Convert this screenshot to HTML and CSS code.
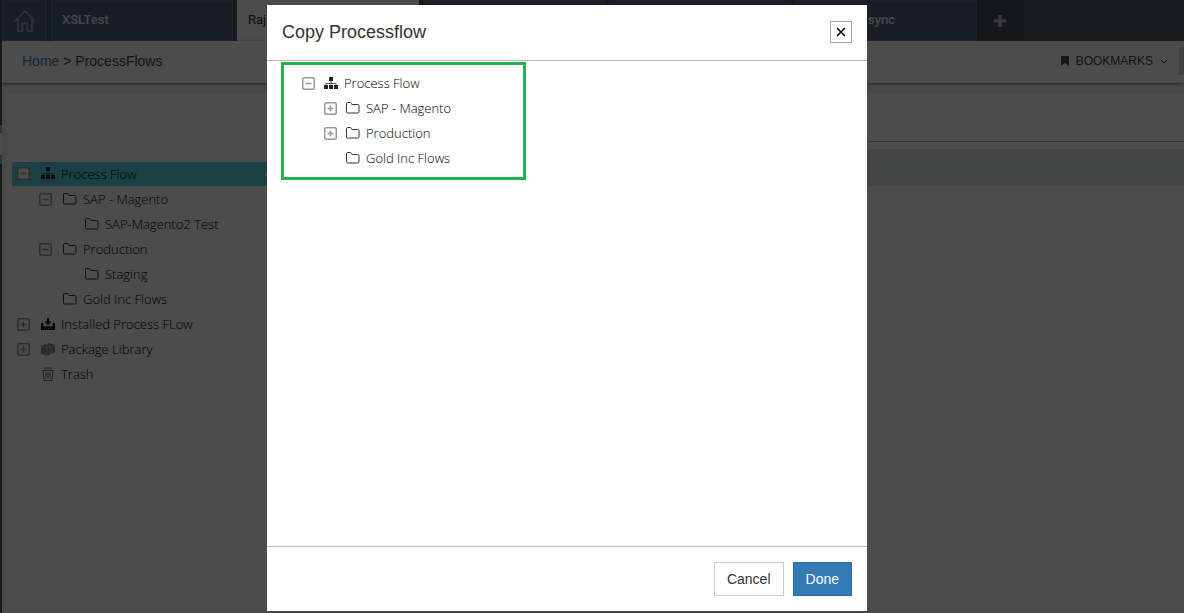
FILE: index.html
```html
<!DOCTYPE html>
<html lang="en">
<head>
<meta charset="utf-8">
<title>ProcessFlows</title>
<link rel="stylesheet" href="styles.css">
</head>
<body>
<svg class="sprite" aria-hidden="true">
  <symbol id="minus" viewBox="0 0 13 13"><rect x=".75" y=".75" width="11.500" height="11.500" rx="1.500"/><path d="M3.500 6.500h6"/></symbol>
  <symbol id="plus" viewBox="0 0 13 13"><rect x=".75" y=".75" width="11.500" height="11.500" rx="1.500"/><path d="M3.500 6.500h6M6.500 3.500v6"/></symbol>
  <symbol id="folder" viewBox="0 0 14 14"><path d="M.5 10.800V2.700Q.5 1.500 1.700 1.500h2.600q.8 0 1 .8l.2.8q.1.4.6.4h5.600q1.300 0 1.300 1.200v6.100q0 1.200-1.200 1.200H1.700Q.5 12 .5 10.800z" fill="none" stroke="currentColor"/></symbol>
  <symbol id="flow" viewBox="0 0 14 14"><path d="M5 1h4v4H5zM0 9h4v4H0zM5 9h4v4H5zM10 9h4v4h-4z" fill="#222"/><path d="M7 5v4M2 9V7.500h10V9" fill="none" stroke="#555"/></symbol>
  <symbol id="install" viewBox="0 0 14 14"><path d="M0 6h2.500v3.500h9V6H14v6.500q0 .5-.5.5H.5q-.5 0-.5-.5zM6 1h2v3.500h2.500L7 8.500 3.500 4.500H6z" fill="#000"/><path d="M1 11.500h12" stroke="#555" stroke-dasharray="1 1"/></symbol>
  <symbol id="package" viewBox="0 0 14 14"><path d="M0 4l8-3 6 2v7l-8 4-6-2.500z" fill="#8a8a8a"/><path d="M0 4l6 2 8-3M6 6v8M4 2.500l6 2.200v2.600M8 10.500l4-2M8 12l3-1.500" fill="none" stroke="#c8c8c8"/></symbol>
  <symbol id="trash" viewBox="0 0 14 14"><path d="M.5 3.500h13M4 3V1h6v2M2 4l1 9.500h8L12 4M5 5.500v6.500M7 5.500v6.500M9 5.500v6.500" fill="none" stroke="#777"/></symbol>
</svg>

<div class="app">
  <div class="rail"><span class="rail-marker"></span></div>
  <div class="main">
    <nav class="tabs">
      <a class="tab tab-home" href="#" aria-label="Home page"><svg class="home-icon" viewBox="0 0 22 24"><path d="M1 12.500L11 2l10 10.500M4 10.500V22h4.500v-7.500h5V22H18V10.500" fill="none" stroke="currentColor" stroke-width="1.800" stroke-linejoin="round"/></svg></a>
      <a class="tab" href="#">XSLTest</a>
      <a class="tab tab-active" href="#">Raj</a>
      <a class="tab" href="#" aria-label="Tab 3"></a>
      <a class="tab" href="#" aria-label="Tab 4"></a>
      <a class="tab tab-end" href="#">sync</a>
      <button class="tab-add" type="button" aria-label="Add tab"><svg class="add-icon" viewBox="0 0 12 12"><path d="M6 0v12M0 6h12" stroke="currentColor" stroke-width="3.500"/></svg></button>
    </nav>
    <header class="crumbs">
      <div><a class="crumb-link" href="#">Home</a> &gt; ProcessFlows</div>
      <div class="tools">
        <button class="bookmarks" type="button">
          <svg class="mark-icon" viewBox="0 0 8 10"><path d="M0 0h8v10L4 6.800 0 10z" fill="currentColor"/></svg>
          BOOKMARKS
          <svg class="chevron" viewBox="0 0 8 5"><path d="M.8.8L4 4 7.200.8" fill="none" stroke="currentColor"/></svg>
        </button>
        <span class="tool-edge"></span>
      </div>
    </header>
    <div class="content">
      <aside class="side">
        <ul class="tree tree-side">
          <li>
            <div class="row row-selected"><button class="toggle" type="button" aria-label="Collapse"><svg><use href="#minus"/></svg></button><svg class="icon"><use href="#flow"/></svg>Process Flow<span class="row-more"></span></div>
            <ul>
              <li>
                <div class="row"><button class="toggle" type="button" aria-label="Collapse"><svg><use href="#minus"/></svg></button><svg class="icon"><use href="#folder"/></svg>SAP - Magento</div>
                <ul><li><div class="row"><span class="toggle"></span><svg class="icon"><use href="#folder"/></svg>SAP-Magento2 Test</div></li></ul>
              </li>
              <li>
                <div class="row"><button class="toggle" type="button" aria-label="Collapse"><svg><use href="#minus"/></svg></button><svg class="icon"><use href="#folder"/></svg>Production</div>
                <ul><li><div class="row"><span class="toggle"></span><svg class="icon"><use href="#folder"/></svg>Staging</div></li></ul>
              </li>
              <li><div class="row"><span class="toggle"></span><svg class="icon"><use href="#folder"/></svg>Gold Inc Flows</div></li>
            </ul>
          </li>
          <li><div class="row"><button class="toggle" type="button" aria-label="Expand"><svg><use href="#plus"/></svg></button><svg class="icon"><use href="#install"/></svg>Installed Process FLow</div></li>
          <li><div class="row"><button class="toggle" type="button" aria-label="Expand"><svg><use href="#plus"/></svg></button><svg class="icon"><use href="#package"/></svg>Package Library</div></li>
          <li><div class="row"><span class="toggle"></span><svg class="icon"><use href="#trash"/></svg>Trash</div></li>
        </ul>
      </aside>
      <main class="pane"><div class="pane-head"></div><div class="pane-band"></div></main>
    </div>
  </div>
</div>

<div class="overlay">
  <section class="modal" role="dialog" aria-labelledby="modal-title">
    <header class="modal-head">
      <h1 class="modal-title" id="modal-title">Copy Processflow</h1>
      <button class="close" type="button" aria-label="Close"><svg viewBox="0 0 10 10"><path d="M1 1l8 8M9 1L1 9" stroke="#000" stroke-width="1.500"/></svg></button>
    </header>
    <div class="modal-body">
      <ul class="tree tree-modal">
        <li>
          <div class="row"><button class="toggle" type="button" aria-label="Collapse"><svg><use href="#minus"/></svg></button><svg class="icon"><use href="#flow"/></svg>Process Flow</div>
          <ul>
            <li><div class="row"><button class="toggle" type="button" aria-label="Expand"><svg><use href="#plus"/></svg></button><svg class="icon"><use href="#folder"/></svg>SAP - Magento</div></li>
            <li><div class="row"><button class="toggle" type="button" aria-label="Expand"><svg><use href="#plus"/></svg></button><svg class="icon"><use href="#folder"/></svg>Production</div></li>
            <li><div class="row"><span class="toggle"></span><svg class="icon"><use href="#folder"/></svg>Gold Inc Flows</div></li>
          </ul>
        </li>
      </ul>
    </div>
    <footer class="modal-foot">
      <button class="btn" type="button">Cancel</button>
      <button class="btn btn-primary" type="button">Done</button>
    </footer>
  </section>
</div>
</body>
</html>
```
FILE: styles.css
```css
* { box-sizing: border-box; }
body {
  margin: 0;
  font: 14px/20px "Liberation Sans", Arial, sans-serif;
  color: #333;
  background: #fdfdfd;
  overflow: hidden;
}
a { text-decoration: none; color: inherit; }
button { font: inherit; color: inherit; background: none; border: 0; padding: 0; }
ul { list-style: none; margin: 0; padding: 0; }
svg { display: block; flex: none; }
.sprite { display: none; }

.app { display: flex; height: 100vh; }
.rail { flex: none; width: 2px; background: #4c505c; padding-top: 125px; }
.rail-marker { display: block; height: 39px; background: #fff; border: solid #5acbd3; border-width: 8px 0 9px; }
.main { flex: 1; min-width: 0; display: flex; flex-direction: column; }

.tabs { display: flex; gap: 4px; height: 41px; background: #485559; }
.tab {
  width: 182px;
  padding: 0 10px;
  border: 1px solid #667382;
  background: #53657f;
  color: #eceef0;
  font-family: Roboto, sans-serif;
  font-size: 13px;
  font-weight: 500;
  line-height: 37px;
}
.tab-home { width: 45px; display: flex; align-items: center; justify-content: center; padding: 0; color: #9da5b0; }
.home-icon { width: 22px; height: 24px; }
.tab-active { background: #fdfdfd; color: #333; font-weight: 400; border-color: #fdfdfd; }
.tab-end { padding-left: 72px; }
.tab-add { width: 46px; margin-left: -4px; background: #4c4f59; color: #b8b8bc; display: flex; align-items: center; justify-content: center; }
.add-icon { width: 12px; height: 12px; }

.crumbs {
  display: flex;
  justify-content: space-between;
  align-items: center;
  height: 42px;
  padding: 0 0 2px 20px;
  background: #fdfdfd;
  color: #4a4a4a;
  box-shadow: 0 1px 3px #777;
  z-index: 1;
}
.crumb-link { color: #4a84b8; }
.tools { display: flex; align-items: center; gap: 11px; }
.bookmarks { display: flex; align-items: center; gap: 7px; font-size: 12px; }
.mark-icon { width: 8px; height: 10px; }
.chevron { width: 8px; height: 5px; }
.tool-edge { width: 5px; height: 28px; background: #d8dadd; }

.content { flex: 1; display: flex; padding: 10px 0 2px 5px; background: #eff2f0; }
.side { flex: none; width: 270px; padding: 69px 0 0 5px; background: #fdfdfd; }
.pane { flex: 1; background: #fdfdfd; }
.pane-head { height: 49px; border-bottom: 1px solid #aaa; }
.pane-band { height: 37px; margin-top: 7px; background: #dce8e3; }

.tree { font-family: "Open Sans", sans-serif; font-size: 13px; font-weight: 300; color: #000; }
.tree ul { padding-left: 22px; }
.row { display: flex; align-items: center; height: 25px; line-height: 25px; white-space: nowrap; }
.icon { width: 14px; height: 14px; margin: 0 6px 2px 0; color: #333; }
.toggle { flex: none; width: 13px; height: 13px; margin-bottom: 1px; }
.toggle svg { width: 13px; height: 13px; fill: none; stroke: #999; stroke-width: 1.5; }
.tree-side .row { padding-left: 5px; }
.tree-side .toggle { margin-right: 11px; }
.row-selected { height: 24px; margin-bottom: 1px; background: #5cdbe6; }
.row-selected .toggle svg { fill: #fff; }
.row-more { width: 12px; height: 3px; margin-left: auto; background: #fff; }
.tree-modal {
  width: 245px;
  margin: 1px 0 0 14px;
  padding: 6px 18px;
  border: 3px solid #22b14c;
}
.tree-modal .toggle { margin-right: 9px; }

.overlay {
  position: fixed;
  inset: 0;
  z-index: 2;
  display: flex;
  justify-content: center;
  padding: 5px 50px 2px 0;
  background: rgba(0, 0, 0, .7);
}
.modal { width: 600px; display: flex; flex-direction: column; background: #fff; }
.modal-head { display: flex; justify-content: space-between; align-items: center; height: 56px; padding: 0 15px 2px; border-bottom: 1px solid #bbb; }
.modal-title { margin: 0; font-size: 18px; font-weight: normal; line-height: 20px; }
.close { width: 22px; height: 22px; border: 1px solid #9dacb8; display: flex; align-items: center; justify-content: center; }
.close svg { width: 10px; height: 10px; }
.modal-body { flex: 1; }
.modal-foot { display: flex; justify-content: flex-end; gap: 9px; padding: 15px; border-top: 1px solid #c4bebe; }
.btn { height: 34px; padding: 0 12px; border: 1px solid #ccc; background: #fff; }
.btn-primary { background: #337ab7; border-color: #2e6da4; color: #fff; }
```
